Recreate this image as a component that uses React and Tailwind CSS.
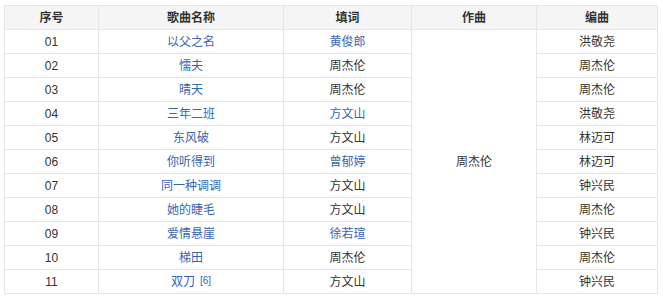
import React from "react";

const rows = [
  { no: "01", song: "以父之名", lyric: "黄俊郎", lyricLink: true, arr: "洪敬尧" },
  { no: "02", song: "懦夫", lyric: "周杰伦", arr: "周杰伦" },
  { no: "03", song: "晴天", lyric: "周杰伦", arr: "周杰伦" },
  { no: "04", song: "三年二班", lyric: "方文山", lyricLink: true, arr: "洪敬尧" },
  { no: "05", song: "东风破", lyric: "方文山", arr: "林迈可" },
  { no: "06", song: "你听得到", lyric: "曾郁婷", lyricLink: true, arr: "林迈可" },
  { no: "07", song: "同一种调调", lyric: "方文山", arr: "钟兴民" },
  { no: "08", song: "她的睫毛", lyric: "方文山", arr: "周杰伦" },
  { no: "09", song: "爱情悬崖", lyric: "徐若瑄", lyricLink: true, arr: "钟兴民" },
  { no: "10", song: "梯田", lyric: "周杰伦", arr: "周杰伦" },
  { no: "11", song: "双刀", ref: "[6]", lyric: "方文山", arr: "钟兴民" },
];

const cell = "border border-[#e6e6e6] h-[24px] p-0 text-center align-middle";

export default function App() {
  return (
    <div
      className="w-[663px] h-[301px] bg-white pt-[5px] pl-[4px]"
      style={{ fontFamily: '"Liberation Sans", "Noto Sans CJK SC", sans-serif' }}
    >
      <table className="border-collapse table-fixed w-[653px] text-[12px] text-[#333]">
        <colgroup>
          <col className="w-[94px]" />
          <col className="w-[185px]" />
          <col className="w-[128px]" />
          <col className="w-[125px]" />
          <col className="w-[121px]" />
        </colgroup>
        <thead>
          <tr className="bg-[#f5f5f5]">
            <th className={cell + " font-bold"}>序号</th>
            <th className={cell + " font-bold"}>歌曲名称</th>
            <th className={cell + " font-bold"}>填词</th>
            <th className={cell + " font-bold"}>作曲</th>
            <th className={cell + " font-bold"}>编曲</th>
          </tr>
        </thead>
        <tbody>
          {rows.map((r, i) => (
            <tr key={r.no}>
              <td className={cell}>{r.no}</td>
              <td className={cell}>
                <span className="text-[#3466b4]">{r.song}</span>
                {r.ref && (
                  <sup className="text-[#3466b4] text-[10px] ml-[5px] relative top-[-2px]">{r.ref}</sup>
                )}
              </td>
              <td className={cell + (r.lyricLink ? " text-[#3466b4]" : "")}>{r.lyric}</td>
              {i === 0 && (
                <td className={cell} rowSpan={11}>
                  周杰伦
                </td>
              )}
              <td className={cell}>{r.arr}</td>
            </tr>
          ))}
        </tbody>
      </table>
    </div>
  );
}
